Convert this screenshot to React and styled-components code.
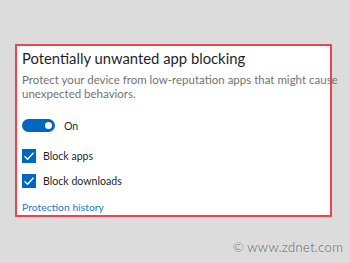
import React from "react";
import styled, { createGlobalStyle } from "styled-components";

const Global = createGlobalStyle`
  html, body {
    margin: 0;
    padding: 0;
    background: #dcdcdc;
  }
  body {
    font-family: Lato, "Noto Sans", sans-serif;
  }
`;

const Page = styled.div`
  width: 350px;
  height: 263px;
  box-sizing: border-box;
  padding: 44px 18px 0 15px;
  display: flex;
  flex-direction: column;
  overflow: hidden;
`;

const Card = styled.section`
  width: 317px;
  height: 173px;
  box-sizing: border-box;
  border: 2px solid #ea4550;
  background: #ffffff;
  padding: 3px 0 0 5px;
  display: flex;
  flex-direction: column;
`;

const Title = styled.h2`
  margin: 0;
  font-size: 14.8px;
  font-weight: 400;
  color: #1f1f1f;
  line-height: 18px;
  white-space: nowrap;
`;

const Desc = styled.p`
  margin: 6px 0 0;
  font-size: 11.5px;
  line-height: 14px;
  color: #737373;
  white-space: nowrap;
`;

const Row = styled.div`
  display: flex;
  align-items: center;
  gap: ${(p) => p.gap || 7}px;
  margin-top: ${(p) => p.top || 0}px;
  font-size: 10.6px;
  color: #1f1f1f;
`;

const Toggle = styled.span`
  width: 33px;
  height: 13px;
  border-radius: 7px;
  background: #0067c0;
  display: flex;
  align-items: center;
  justify-content: flex-end;
  padding-right: 3px;
  box-sizing: border-box;
`;

const Knob = styled.span`
  width: 7px;
  height: 7px;
  border-radius: 50%;
  background: #ffffff;
`;

const Box = styled.span`
  width: 14px;
  height: 14px;
  background: #0067c0;
  display: flex;
  align-items: center;
  justify-content: center;
`;

const Link = styled.a`
  margin-top: 13px;
  font-size: 10.4px;
  color: #2a78c6;
  text-decoration: none;
`;

const Footer = styled.div`
  display: flex;
  justify-content: flex-end;
  margin-top: 22px;
  margin-right: -11px;
`;

const Mark = styled.span`
  font-size: 13.5px;
  color: #8a8a8a;
  text-shadow: 0 0 1px #fff, 0 0 1px #fff;
`;

const Check = () => (
  <svg width="12" height="12" viewBox="0 0 12 12">
    <path d="M1.5 6.2 L4.6 9.2 L10.5 2.8" fill="none" stroke="#fff" strokeWidth="1.4" />
  </svg>
);

export default function App() {
  return (
    <>
      <Global />
      <Page>
        <Card>
          <Title>Potentially unwanted app blocking</Title>
          <Desc>
            Protect your device from low-reputation apps that might cause
            <br />
            unexpected behaviors.
          </Desc>
          <Row top={18} gap={9}>
            <Toggle>
              <Knob />
            </Toggle>
            On
          </Row>
          <Row top={17}>
            <Box>
              <Check />
            </Box>
            Block apps
          </Row>
          <Row top={11}>
            <Box>
              <Check />
            </Box>
            Block downloads
          </Row>
          <Link href="#">Protection history</Link>
        </Card>
        <Footer>
          <Mark>© www.zdnet.com</Mark>
        </Footer>
      </Page>
    </>
  );
}
